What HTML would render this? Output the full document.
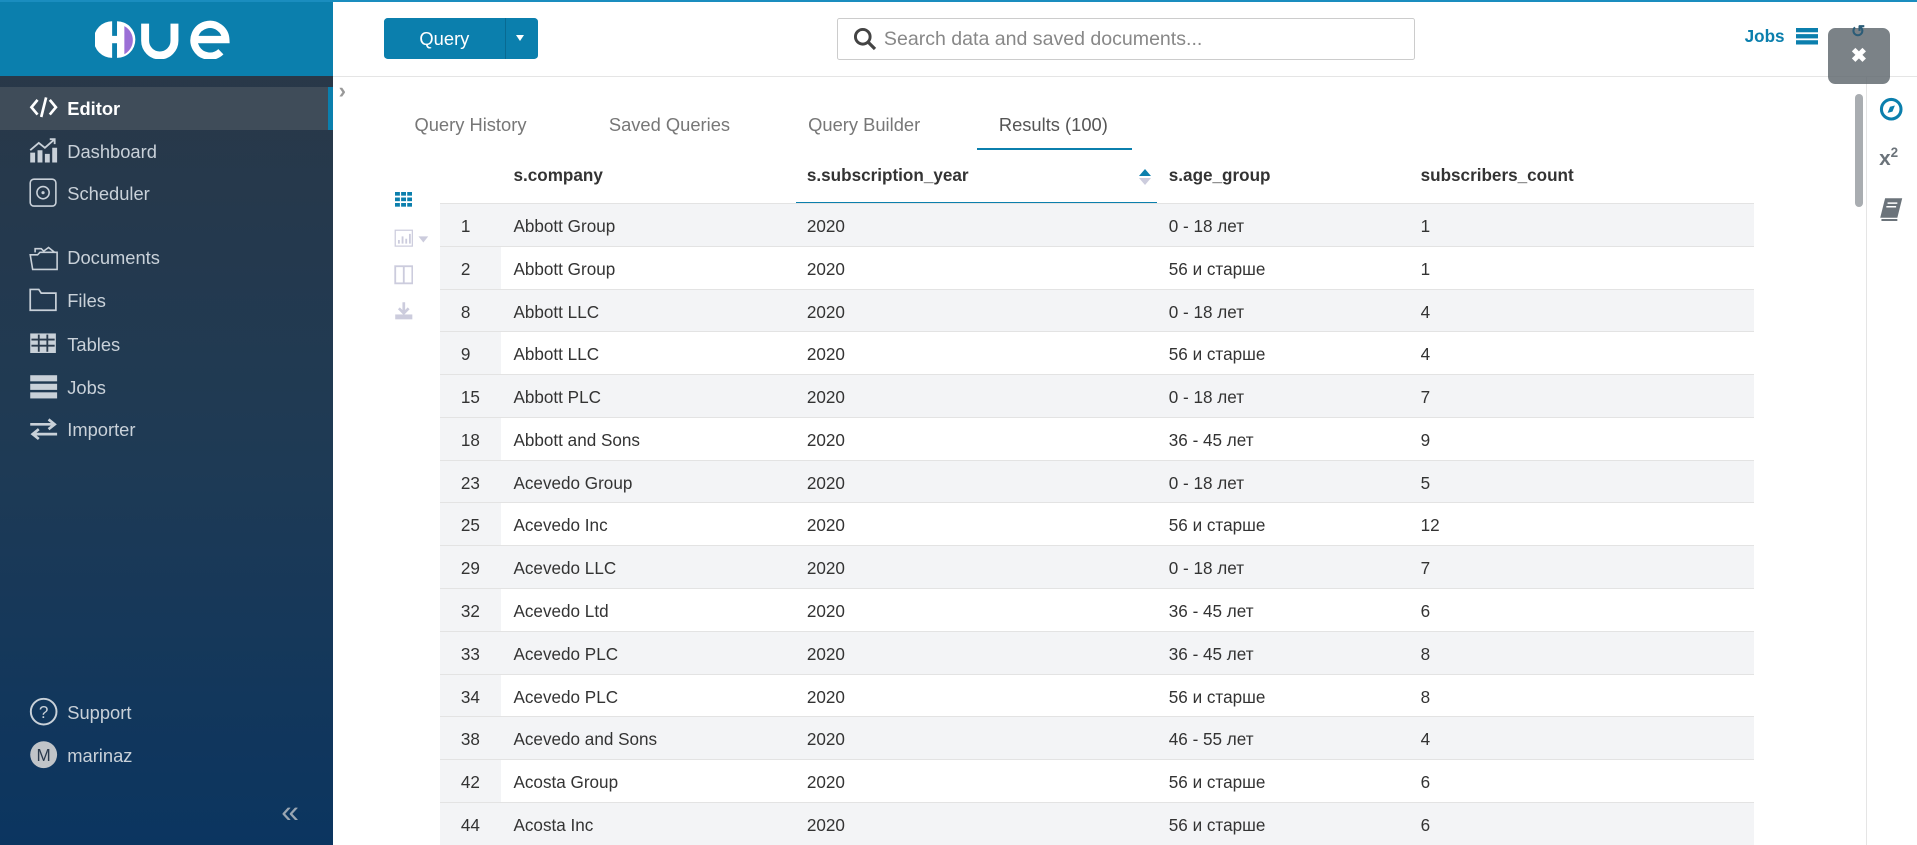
<!DOCTYPE html>
<html><head><meta charset="utf-8"><style>
*{box-sizing:border-box;margin:0;padding:0}
html,body{width:1568px;height:691px;overflow:hidden;background:#fff}
body{zoom:1.22258;font-family:"Liberation Sans",Arial,sans-serif;position:relative;color:#333}
.a{position:absolute}
#sb{left:0;top:0;width:272px;height:691px;background:linear-gradient(#2b3846 0%,#1e3a55 55%,#0b3560 100%)}
#logo{left:0;top:0;width:272px;height:62px;background:#0b7fad}
.mi{position:absolute;left:0;width:272px;height:35px;color:#c9d1d9;font-size:15px;line-height:36px;padding-left:55px}
.mi svg{position:absolute;left:24px;top:7px}
.tab{position:absolute;top:93px;font-size:15px;color:#777}
.row{position:absolute;left:360px;width:1075px;height:35px;border-top:1px solid #e3e3e3;font-size:14px;line-height:37px;color:#333}
.row span{position:absolute;top:0}
.rn{position:absolute;left:0;top:0;width:50px;height:35px;background:#f3f4f6}
</style></head><body>
<div class="a" style="left:0;top:0;width:1568px;height:2px;background:#1a8dbf;z-index:5"></div>
<div id="sb" class="a"></div>
<div id="logo" class="a">
<svg class="a" style="left:78px;top:16px" width="112" height="32" viewBox="0 0 112 32">
<path d="M14 1 A15 15 0 0 0 14 31 Z" fill="#fff"/><rect x="6" y="13" width="18" height="6" fill="#fff"/>
<path d="M18 1 A15 15 0 0 1 18 31 Z" fill="#fff"/><path d="M24 5 A13 13 0 0 1 24 28 Z" fill="#9b6fd6"/>
<path d="M41 3 V17 A12 12 0 0 0 65 17 V3" stroke="#fff" stroke-width="6.5" fill="none"/>
<path d="M80 16 H107 A13 13 0 1 0 103 26" stroke="#fff" stroke-width="6" fill="none"/>
</svg></div>
<div class="a" style="left:0;top:71px;width:272px;height:35px;background:#3f4c59"></div>
<div class="a" style="left:268px;top:71px;width:4px;height:35px;background:#0b7fad"></div>
<div class="mi" style="top:71px;color:#fff;font-weight:bold"><svg width="24" height="20" viewBox="0 0 24 20"><path d="M7 4 L2 10 L7 16 M17 4 L22 10 L17 16 M14 2 L10 18" stroke="#fff" stroke-width="2.2" fill="none"/></svg>Editor</div>
<div class="mi" style="top:106px"><svg width="24" height="22" viewBox="0 0 24 22"><path d="M1 20h4v-8h-4z M7 20h4v-10h-4z M13 20h4v-7h-4z M19 20h4v-12h-4z" fill="#c9d1d9"/><path d="M1 10 L8 4 L13 8 L21 1 M17 1h4v4" stroke="#c9d1d9" stroke-width="1.5" fill="none"/></svg>Dashboard</div>
<div class="mi" style="top:141px"><svg width="24" height="24" viewBox="0 0 24 24" style="top:5px"><rect x="1" y="1" width="21" height="22" rx="3" stroke="#c9d1d9" stroke-width="1.3" fill="none"/><circle cx="11.5" cy="12" r="5" stroke="#c9d1d9" stroke-width="1.3" fill="none"/><circle cx="11.5" cy="12" r="1.3" fill="#c9d1d9"/></svg>Scheduler</div>
<div class="mi" style="top:193px"><svg width="26" height="22" viewBox="0 0 26 22"><path d="M1 8h6l2-2h14v14H3z M5 6V3h5l2 2 4-3 5 4" stroke="#c9d1d9" stroke-width="1.3" fill="none"/></svg>Documents</div>
<div class="mi" style="top:228px"><svg width="24" height="20" viewBox="0 0 24 20"><path d="M1 2h7l2 3h12v14H1z" stroke="#c9d1d9" stroke-width="1.4" fill="none"/></svg>Files</div>
<div class="mi" style="top:264px"><svg width="24" height="20" viewBox="0 0 24 20"><rect x="1" y="2" width="21" height="16" fill="#c9d1d9"/><path d="M2 7h19M2 12h19M8 3v14M15 3v14" stroke="#2a3a4c" stroke-width="1.5"/></svg>Tables</div>
<div class="mi" style="top:299px"><svg width="24" height="20" viewBox="0 0 24 20"><rect x="1" y="1" width="22" height="5" fill="#c9d1d9"/><rect x="1" y="8" width="22" height="5" fill="#c9d1d9"/><rect x="1" y="15" width="22" height="5" fill="#c9d1d9"/></svg>Jobs</div>
<div class="mi" style="top:334px"><svg width="24" height="20" viewBox="0 0 24 20"><path d="M1 6h19M16 2l5 4-5 4M23 14H4M8 10l-5 4 5 4" stroke="#c9d1d9" stroke-width="2.2" fill="none"/></svg>Importer</div>
<div class="mi" style="top:565px"><svg width="24" height="24" viewBox="0 0 24 24" style="top:5px"><circle cx="12" cy="12" r="10.5" stroke="#c9d1d9" stroke-width="1.6" fill="none"/><text x="12" y="17" text-anchor="middle" font-size="14" fill="#c9d1d9" font-family="Liberation Sans">?</text></svg>Support</div>
<div class="mi" style="top:600px"><svg width="24" height="24" viewBox="0 0 24 24" style="top:5px"><circle cx="12" cy="12" r="11" fill="#c0c4c8"/><text x="12" y="17" text-anchor="middle" font-size="14" fill="#2a3a4c" font-family="Liberation Sans">M</text></svg>marinaz</div>
<div class="a" style="left:230px;top:649px;color:#9aa6b2;font-size:26px">«</div>

<div class="a" style="left:314px;top:15px;width:126px;height:33px;background:#0b7fad;border-radius:3px"></div>
<div class="a" style="left:413px;top:15px;width:1px;height:33px;background:#086a92"></div>
<div class="a" style="left:314px;top:15px;width:99px;height:34px;line-height:34px;text-align:center;color:#fff;font-size:15px">Query</div>
<div class="a" style="left:422px;top:29px;border:4px solid transparent;border-top:5px solid #fff"></div>
<div class="a" style="left:685px;top:15px;width:472px;height:34px;border:1px solid #ccc;border-radius:2px"></div>
<svg class="a" style="left:698px;top:22px" width="20" height="20" viewBox="0 0 20 20"><circle cx="8" cy="8" r="6" stroke="#444" stroke-width="2.4" fill="none"/><path d="M12.5 12.5L18 18" stroke="#444" stroke-width="2.6"/></svg>
<div class="a" style="left:723px;top:23px;font-size:16px;color:#888">Search data and saved documents...</div>
<div class="a" style="left:1427px;top:22px;font-size:14px;font-weight:bold;color:#0b7fad">Jobs</div>
<svg class="a" style="left:1469px;top:23px" width="18" height="14"><rect y="0" width="18" height="3.5" fill="#0b7fad"/><rect y="5" width="18" height="3.5" fill="#0b7fad"/><rect y="10" width="18" height="3.5" fill="#0b7fad"/></svg>
<div class="a" style="left:272px;top:62px;width:1296px;height:1px;background:#e5e5e5"></div>
<div class="a" style="left:1526px;top:62px;width:1px;height:629px;background:#e5e5e5"></div>
<div class="a" style="left:1517px;top:77px;width:7px;height:92px;background:#a9adb1;border-radius:4px"></div>
<div class="a" style="left:1495px;top:23px;width:51px;height:46px;background:rgba(94,102,108,.82);border-radius:6px;color:#fff;text-align:center;font-size:16px;line-height:46px;font-weight:bold"><span style="position:absolute;left:19px;top:-20px;color:#2b5c77;font-size:14px">↺</span>✖</div>
<svg class="a" style="left:1537px;top:79px" width="20" height="20"><circle cx="10" cy="10" r="8" stroke="#0b7fad" stroke-width="2.5" fill="none"/><path d="M7 13l2-5 4-1-2 5z" fill="#0b7fad"/></svg>
<div class="a" style="left:1537px;top:119px;font-size:17px;font-weight:bold;color:#6b737a">x<sup style="font-size:11px">2</sup></div>
<svg class="a" style="left:1537px;top:161px" width="20" height="20"><path d="M5 1h14l-4 16H1z" fill="#6b737a"/><path d="M2 19h13" stroke="#6b737a" stroke-width="2"/><path d="M7 5h8M6 8h8" stroke="#fff" stroke-width="1.2"/></svg>
<div class="a" style="left:277px;top:64px;color:#999;font-size:18px;font-weight:bold">›</div>

<div class="tab" style="left:339px">Query History</div>
<div class="tab" style="left:498px">Saved Queries</div>
<div class="tab" style="left:661px">Query Builder</div>
<div class="tab" style="left:817px;color:#555">Results (100)</div>
<div class="a" style="left:799px;top:121px;width:127px;height:2px;background:#0b7fad"></div>

<svg class="a" style="left:323px;top:157px" width="14" height="12"><g fill="#0b7fad"><rect x="0" y="0" width="4" height="3"/><rect x="5" y="0" width="4" height="3"/><rect x="10" y="0" width="4" height="3"/><rect x="0" y="4.5" width="4" height="3"/><rect x="5" y="4.5" width="4" height="3"/><rect x="10" y="4.5" width="4" height="3"/><rect x="0" y="9" width="4" height="3"/><rect x="5" y="9" width="4" height="3"/><rect x="10" y="9" width="4" height="3"/></g></svg>
<svg class="a" style="left:322px;top:187px" width="32" height="16"><rect x="1" y="1" width="14" height="13" stroke="#ccd" fill="none"/><path d="M4 12v-3M7 12v-6M10 12v-4M13 12v-8" stroke="#ccd" stroke-width="1.5"/><path d="M20 6l4 5 4-5z" fill="#ccd"/></svg>
<svg class="a" style="left:322px;top:217px" width="16" height="16"><rect x="1" y="1" width="14" height="14" stroke="#ccd" fill="none" stroke-width="1.5"/><path d="M8 1v14" stroke="#ccd" stroke-width="1.5"/></svg>
<svg class="a" style="left:322px;top:246px" width="16" height="16"><path d="M8 1v8M4 6l4 4 4-4" stroke="#ccd" stroke-width="2.2" fill="none"/><rect x="1" y="11" width="14" height="4" fill="#ccd"/></svg>

<div class="a" style="left:420px;top:136px;font-size:14px;font-weight:bold;color:#333">s.company</div>
<div class="a" style="left:660px;top:136px;font-size:14px;font-weight:bold;color:#333">s.subscription_year</div>
<div class="a" style="left:956px;top:136px;font-size:14px;font-weight:bold;color:#333">s.age_group</div>
<div class="a" style="left:1162px;top:136px;font-size:14px;font-weight:bold;color:#333">subscribers_count</div>
<div class="a" style="left:651px;top:165px;width:295px;height:1px;background:#0b7fad"></div>
<div class="a" style="left:932px;top:138px;border:5px solid transparent;border-bottom:6px solid #0b7fad;border-top:0"></div>
<div class="a" style="left:932px;top:146px;border:5px solid transparent;border-top:6px solid #ccd;border-bottom:0"></div>

<div id="rows"></div>
<script>
var d=[[1,"Abbott Group","0 - 18 лет",1],[2,"Abbott Group","56 и старше",1],[8,"Abbott LLC","0 - 18 лет",4],[9,"Abbott LLC","56 и старше",4],[15,"Abbott PLC","0 - 18 лет",7],[18,"Abbott and Sons","36 - 45 лет",9],[23,"Acevedo Group","0 - 18 лет",5],[25,"Acevedo Inc","56 и старше",12],[29,"Acevedo LLC","0 - 18 лет",7],[32,"Acevedo Ltd","36 - 45 лет",6],[33,"Acevedo PLC","36 - 45 лет",8],[34,"Acevedo PLC","56 и старше",8],[38,"Acevedo and Sons","46 - 55 лет",4],[42,"Acosta Group","56 и старше",6],[44,"Acosta Inc","56 и старше",6]];
var h="";d.forEach(function(r,i){h+='<div class="row" style="top:'+(166+35*i)+'px;background:'+(i%2?'#fff':'#f3f4f6')+'"><div class="rn"></div><span style="left:17px">'+r[0]+'</span><span style="left:60px">'+r[1]+'</span><span style="left:300px">2020</span><span style="left:596px">'+r[2]+'</span><span style="left:802px">'+r[3]+'</span></div>'});
document.getElementById("rows").innerHTML=h;
</script>
</body></html>
